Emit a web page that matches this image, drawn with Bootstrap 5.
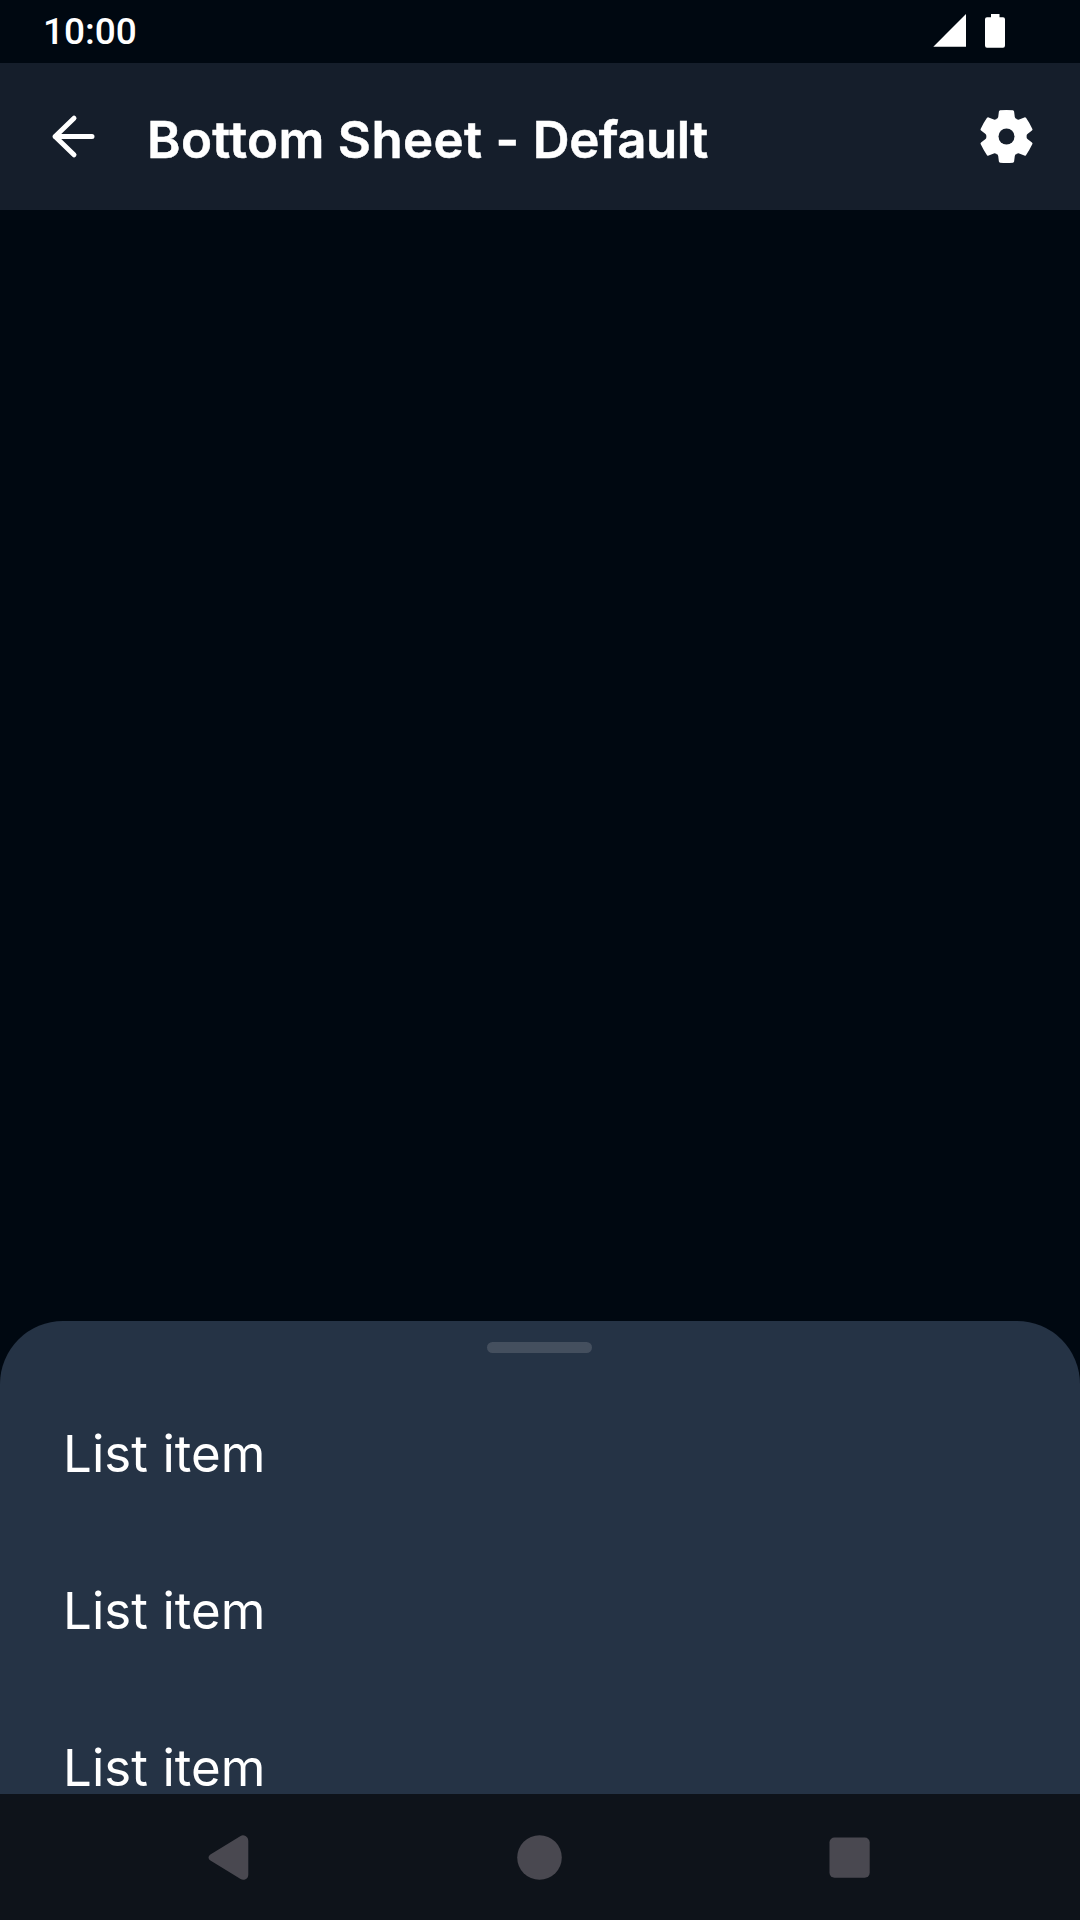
<!DOCTYPE html>
<html lang="en" data-bs-theme="dark">
<head>
<meta charset="utf-8">
<meta name="viewport" content="width=device-width, initial-scale=1">
<title>Bottom Sheet - Default</title>
<link href="https://cdn.jsdelivr.net/npm/bootstrap@5.3.0/dist/css/bootstrap.min.css" rel="stylesheet">
<style>
body { background: #000811; color: #fff; font-family: Inter, sans-serif; font-variant-ligatures: none; font-feature-settings: "calt" 0; }
.screen { height: 1920px; }
.status-bar { height: 63px; padding: 0 74px 0 43px; }
.clock { font: 500 37px/64px Roboto, sans-serif; }
.app-bar { height: 147px; padding: 0 42px; background: #151e2b; }
.app-title { font-size: 51px; font-weight: 600; line-height: 64px; letter-spacing: .35px; -webkit-text-stroke: .5px #fff; margin: 6px 0 0 42px; }
.title-state { letter-spacing: -.5px; }
.icon-box { width: 63px; height: 63px; }
.sheet { height: 473px; background: #253345; border-radius: 63px 63px 0 0; }
.drag-handle { width: 105px; height: 11px; margin: 21px 0 22px 487px; background: #444f5e; }
.sheet-item { height: 157px; padding: 0 63px; font-size: 51px; font-weight: 400; line-height: 50px; letter-spacing: .05px; }
.system-nav { height: 126px; background: #0e131a; padding: 0 199px 0 198px; }
</style>
<script src="https://cdn.jsdelivr.net/npm/bootstrap@5.3.0/dist/js/bootstrap.bundle.min.js" defer></script>
</head>
<body>
<div class="screen d-flex flex-column overflow-hidden">
  <div class="status-bar d-flex justify-content-between flex-shrink-0">
    <span class="clock">10:00</span>
    <svg width="73" height="63" viewBox="933 0 73 63" fill="#fff" aria-hidden="true">
      <path d="M933.3 46.8H966V14z"/>
      <path d="M991 14h8.5v3.3h3.5q2 0 2 2v26.3q0 2.2-2 2.2h-16q-2 0-2-2.2V19.300q0-2 2-2h4z"/>
    </svg>
  </div>
  <header class="app-bar d-flex align-items-center flex-shrink-0">
    <svg class="icon-box flex-shrink-0" viewBox="42 105 63 63" fill="none" stroke="#fff" stroke-width="5" stroke-linecap="round" stroke-linejoin="round" aria-label="Back">
      <path d="M74 118.200 55.100 136.500 74 154.800M55.100 136.500H92"/>
    </svg>
    <h1 class="app-title text-nowrap">Bottom Sheet - <span class="title-state">Default</span></h1>
    <svg class="icon-box ms-auto flex-shrink-0" viewBox="-31.5 -31.5 63 63" fill="#fff" aria-label="Settings">
      <defs><path id="tooth" d="M-10.200-17.600Q-8.600-17.800-8.300-19.400L-7.600-25Q-7.400-26-6.400-26.200Q0-26.700 6.400-26.200Q7.400-26 7.600-25L8.300-19.400Q8.600-17.800 10.200-17.600L0 0Z"/></defs>
      <circle r="19.500"/>
      <use href="#tooth"/><use href="#tooth" transform="rotate(60)"/><use href="#tooth" transform="rotate(120)"/>
      <use href="#tooth" transform="rotate(180)"/><use href="#tooth" transform="rotate(240)"/><use href="#tooth" transform="rotate(300)"/>
      <circle r="8" fill="#151e2b"/>
    </svg>
  </header>
  <main class="flex-grow-1"></main>
  <section class="sheet d-flex flex-column flex-shrink-0 overflow-hidden">
    <div class="drag-handle rounded-pill flex-shrink-0"></div>
    <ul class="list-unstyled m-0">
      <li class="sheet-item d-flex align-items-center">List item</li>
      <li class="sheet-item d-flex align-items-center">List item</li>
      <li class="sheet-item d-flex align-items-center">List item</li>
    </ul>
  </section>
  <nav class="system-nav d-flex justify-content-between align-items-center flex-shrink-0">
    <svg class="icon-box" viewBox="198 1826 63 63" fill="#494850"><path d="M240.600 1835.900Q243 1834.500 245.500 1836Q248.300 1837.500 248.300 1841V1874.500Q248.300 1878 245.500 1879.300Q243 1880.500 240.600 1879.100L210.400 1860.600Q208.500 1859.300 208.500 1857.500T210.400 1854.400Z"/></svg>
    <svg class="icon-box" viewBox="508 1826 63 63" fill="#494850"><circle cx="539.500" cy="1857.500" r="22.300"/></svg>
    <svg class="icon-box" viewBox="818 1826 63 63" fill="#494850"><rect x="829.500" y="1837.500" width="40.200" height="40.300" rx="5"/></svg>
  </nav>
</div>
</body>
</html>
